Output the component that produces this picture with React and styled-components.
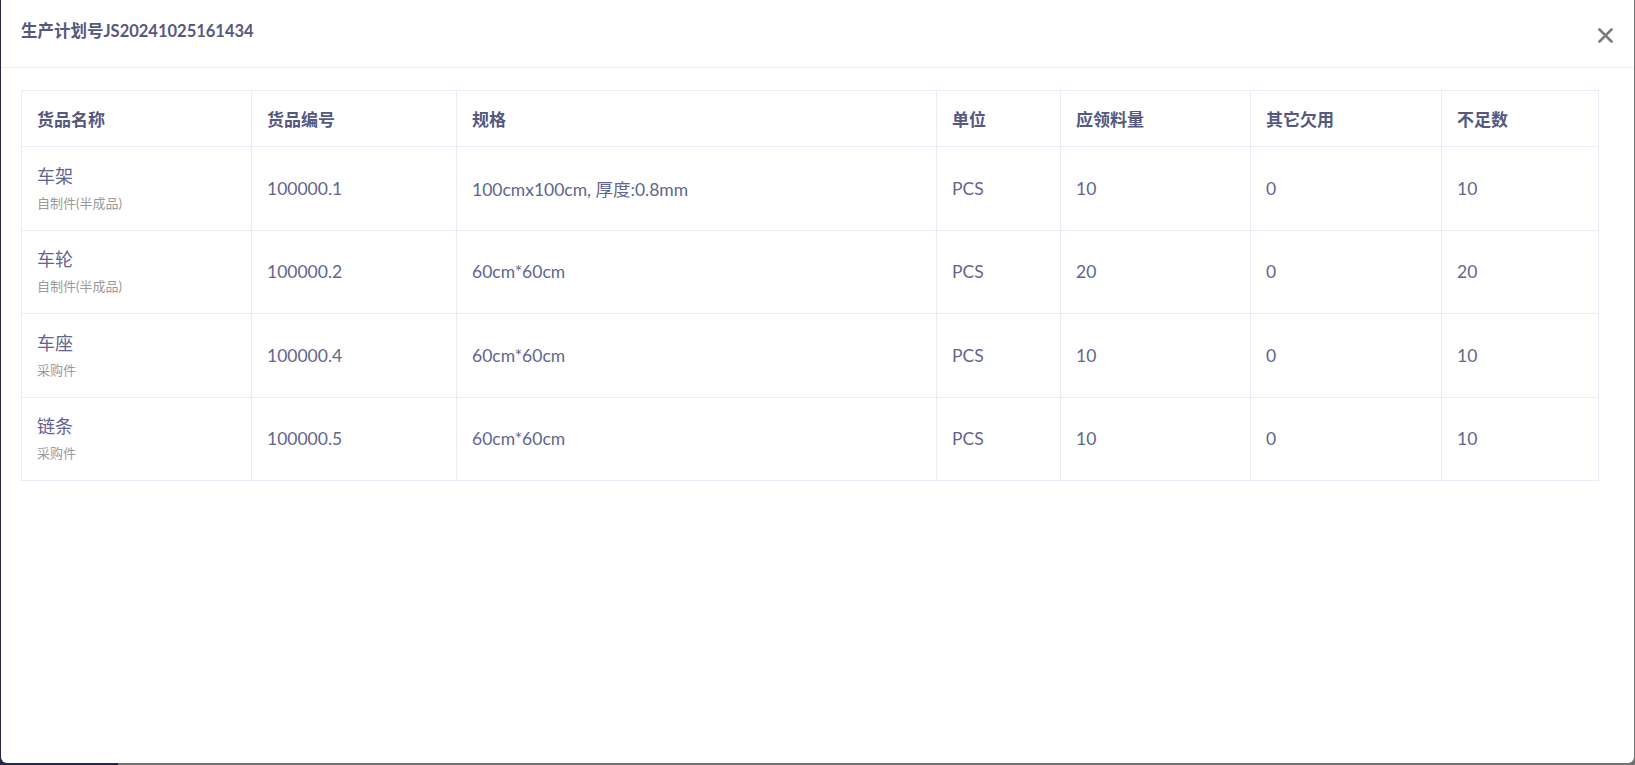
import React from "react";
import styled, { createGlobalStyle } from "styled-components";

const GlobalStyle = createGlobalStyle`
  html, body {
    margin: 0;
    padding: 0;
    background: #26264f;
  }
  body {
    font-family: Lato, "Noto Sans CJK SC", sans-serif;
  }
`;

const Backdrop = styled.div`
  width: 1635px;
  height: 765px;
  padding: 0 1px 2px 1px;
  box-sizing: border-box;
  background: linear-gradient(to right, #26264f 0 118px, #727272 118px);
`;

const Modal = styled.div`
  height: 100%;
  background: #ffffff;
  border-radius: 0 0 6px 6px;
  display: flex;
  flex-direction: column;
`;

const Header = styled.div`
  height: 68px;
  box-sizing: border-box;
  border-bottom: 1px solid #ebebf7;
  display: flex;
  align-items: flex-start;
  justify-content: space-between;
  padding: 21px 20px 0 20px;
`;

const Title = styled.h3`
  margin: 0;
  font-size: 16.5px;
  line-height: 20px;
  font-weight: 700;
  color: #55597f;
`;

const CloseButton = styled.button`
  border: none;
  background: none;
  padding: 0;
  margin-top: 7px;
  margin-right: 1px;
  width: 15px;
  height: 15px;
  cursor: pointer;
  display: flex;
`;

const Body = styled.div`
  padding: 22px 36px 0 20px;
`;

const Table = styled.table`
  width: 1577px;
  border-collapse: collapse;
  table-layout: fixed;
  border: 1px solid #ebebf7;
`;

const HeadCell = styled.th`
  height: 55px;
  padding: 0 15px;
  text-align: left;
  font-size: 17px;
  font-weight: 700;
  color: #55597f;
  border: 1px solid #ebebf7;
`;

const Cell = styled.td`
  height: 82.5px;
  padding: 0 15px;
  font-size: 17.5px;
  color: #62668e;
  border: 1px solid #ebebf7;
  vertical-align: middle;
`;

const Name = styled.div`
  font-size: 18px;
  line-height: 24px;
  color: #62668e;
`;

const Kind = styled.div`
  margin-top: 5px;
  font-size: 13px;
  line-height: 20px;
  color: #9a9a9a;
`;

const columns = [
  { title: "货品名称", width: 230 },
  { title: "货品编号", width: 205 },
  { title: "规格", width: 480 },
  { title: "单位", width: 124 },
  { title: "应领料量", width: 190 },
  { title: "其它欠用", width: 191 },
  { title: "不足数", width: 157 },
];

const rows = [
  { name: "车架", kind: "自制件(半成品)", code: "100000.1", spec: "100cmx100cm, 厚度:0.8mm", unit: "PCS", need: 10, owe: 0, lack: 10 },
  { name: "车轮", kind: "自制件(半成品)", code: "100000.2", spec: "60cm*60cm", unit: "PCS", need: 20, owe: 0, lack: 20 },
  { name: "车座", kind: "采购件", code: "100000.4", spec: "60cm*60cm", unit: "PCS", need: 10, owe: 0, lack: 10 },
  { name: "链条", kind: "采购件", code: "100000.5", spec: "60cm*60cm", unit: "PCS", need: 10, owe: 0, lack: 10 },
];

export default function App() {
  return (
    <>
      <GlobalStyle />
      <Backdrop>
        <Modal>
          <Header>
            <Title>生产计划号JS20241025161434</Title>
            <CloseButton aria-label="close">
              <svg width="15" height="15" viewBox="0 0 15 15">
                <path d="M1.5 1.5 L13.5 13.5 M13.5 1.5 L1.5 13.5" stroke="#7b7b7b" strokeWidth="2.6" strokeLinecap="round" />
              </svg>
            </CloseButton>
          </Header>
          <Body>
            <Table>
              <colgroup>
                {columns.map((c) => (
                  <col key={c.title} style={{ width: c.width }} />
                ))}
              </colgroup>
              <thead>
                <tr>
                  {columns.map((c) => (
                    <HeadCell key={c.title}>{c.title}</HeadCell>
                  ))}
                </tr>
              </thead>
              <tbody>
                {rows.map((r) => (
                  <tr key={r.code}>
                    <Cell>
                      <Name>{r.name}</Name>
                      <Kind>{r.kind}</Kind>
                    </Cell>
                    <Cell>{r.code}</Cell>
                    <Cell>{r.spec}</Cell>
                    <Cell>{r.unit}</Cell>
                    <Cell>{r.need}</Cell>
                    <Cell>{r.owe}</Cell>
                    <Cell>{r.lack}</Cell>
                  </tr>
                ))}
              </tbody>
            </Table>
          </Body>
        </Modal>
      </Backdrop>
    </>
  );
}
